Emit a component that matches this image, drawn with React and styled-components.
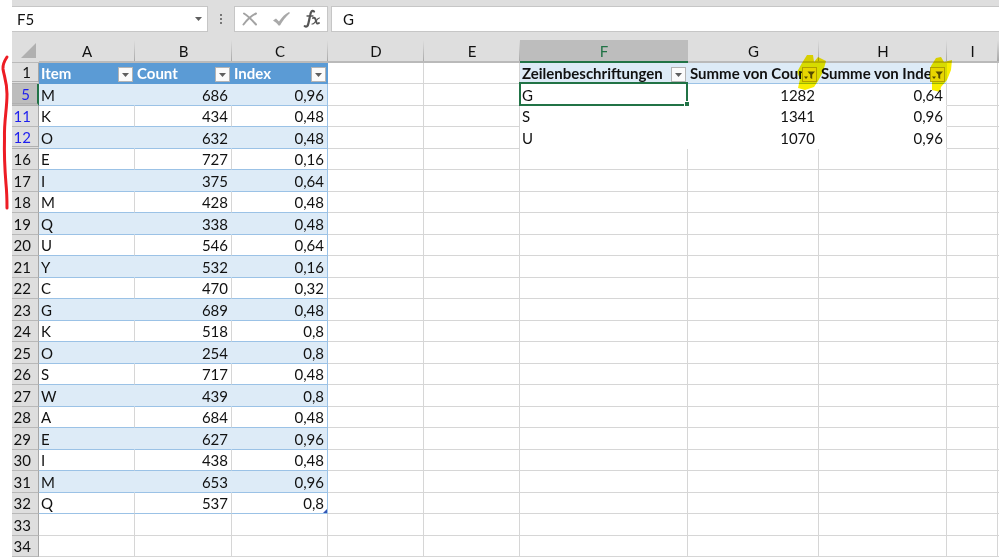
import styled, { createGlobalStyle } from 'styled-components';

const GlobalStyle = createGlobalStyle`
body {
    margin: 0;
    background-color: white;
    color: #111;
    font-family: Lato, "Liberation Sans", sans-serif;
    font-size: 15px;
    overflow: hidden;
}
`;

const Sheet = styled.main`
position: relative;
padding-left: 12px;
`;

const FormulaBar = styled.header`
display: flex;
align-items: center;
height: 40px;
box-sizing: border-box;
padding: 6px 0 8px;
background-color: #dedede;
`;

const NameBox = styled.div`
display: flex;
align-items: center;
width: 196px;
height: 26px;
box-sizing: border-box;
border: 1px solid #c6c6c6;
border-left: 0;
background-color: white;
`;

const TextInput = styled.input`
flex: 1;
min-width: 0;
height: 24px;
box-sizing: border-box;
border: 0;
outline: 0;
background: white;
color: inherit;
font: inherit;
padding: 0 ${props => props.$inset};
`;

const PlainButton = styled.button`
display: flex;
align-items: center;
justify-content: center;
width: ${props => props.$width};
height: 24px;
padding: 0;
border: 0;
background: transparent;
`;

const Grip = styled.div`
display: flex;
flex-direction: column;
align-items: center;
gap: 2px;
width: 26px;
`;

const Dot = styled.span`
width: 2px;
height: 2px;
background-color: #777;
`;

const Tools = styled.div`
display: flex;
justify-content: space-between;
width: 94px;
height: 26px;
box-sizing: border-box;
border: 1px solid #c6c6c6;
background-color: white;
`;

const FormulaBox = styled.div`
display: flex;
flex: 1;
height: 26px;
box-sizing: border-box;
margin-left: 3px;
border: 1px solid #c6c6c6;
border-right: 0;
`;

const Grid = styled.table`
width: 100%;
table-layout: fixed;
border-collapse: separate;
border-spacing: 0;
`;

const Col = styled.col`
width: ${props => props.$width};
`;

const HeadRow = styled.tr`
height: 23px;
`;

const Row = styled.tr`
height: 21px;
&:nth-child(even) {
    height: 22px;
}
`;

const ColumnHead = styled.th`
box-sizing: border-box;
padding: 2px 0 0;
font-weight: 400;
line-height: 19px;
color: ${props => (props.$active ? '#217346' : 'inherit')};
background: ${props => (props.$active ? '#bdbdbd' : 'linear-gradient(#dedede, #a8a8a8) right / 1px 100% no-repeat #dedede')};
border-bottom: ${props => (props.$active ? '2px solid #217346' : '2px solid #bababa')};
`;

const Corner = styled.td`
padding: 0 3px 2px 0;
background-color: #dedede;
border-bottom: 1px solid #bababa;
line-height: 0;
text-align: right;
`;

const RowHead = styled.th`
padding: 0 7px 0 0;
font-weight: 400;
line-height: 18px;
text-align: right;
color: ${props => (props.$filtered ? '#1f1fee' : 'inherit')};
background-color: ${props => (props.$active ? '#bdbdbd' : '#dedede')};
border-right: ${props => (props.$active ? '2px solid #217346' : '1px solid #a6a6a6')};
border-bottom: ${props => (props.$hiddenBelow ? '3px double #b0b0b0' : '1px solid #b8b8b8')};
`;

const Cell = styled.td`
padding: 0 3px 0 2px;
line-height: 18px;
white-space: nowrap;
overflow: hidden;
text-align: ${props => (props.$number ? 'right' : 'left')};
border-right: 1px solid #d6d6d6;
border-bottom: 1px solid #d6d6d6;
&:last-child {
    padding: 0;
    border-right: 0;
}
`;

const TableHead = styled(Cell)`
padding: 0 1px 0 2px;
font-weight: 700;
color: white;
background-color: #5b9bd5;
border-color: #5b9bd5;
`;

const TableCell = styled(Cell)`
background-color: ${props => (props.$band ? '#ddebf7' : 'white')};
border-bottom-color: #9bc2e6;
border-right-color: ${props => (props.$last ? '#9bc2e6' : props.$band ? '#ddebf7' : '#d6d6d6')};
position: relative;
`;

const TableEnd = styled.span`
position: absolute;
right: 0;
bottom: 0;
border-left: 4px solid transparent;
border-bottom: 4px solid #3355b5;
`;

const PivotHead = styled(Cell)`
padding: 0 1px 0 2px;
font-weight: 700;
background-color: #ddebf7;
border-right-color: #ddebf7;
border-bottom-color: #9bc2e6;
`;

const PivotCell = styled(Cell)`
border-bottom-color: white;
border-right-color: ${props => (props.$last ? '#d6d6d6' : 'white')};
`;

const SelectedCell = styled(Cell)`
position: relative;
overflow: visible;
border-color: white;
&::before {
    content: '';
    position: absolute;
    inset: -2px -1px -1px -1px;
    border: 2px solid #217346;
}
&::after {
    content: '';
    position: absolute;
    right: -3px;
    bottom: -2px;
    width: 4px;
    height: 4px;
    border: 1px solid white;
    background-color: #217346;
}
`;

const HeadContent = styled.div`
display: flex;
align-items: center;
height: 20px;
`;

const HeadLabel = styled.span`
flex: 1;
min-width: 0;
overflow: hidden;
`;

const FilterButton = styled.button`
display: flex;
flex: none;
align-items: center;
justify-content: center;
width: 15px;
height: 15px;
margin-top: 3px;
padding: 0;
border: 1px solid ${props => (props.$active ? '#b5ab22' : '#b4b4b4')};
background-color: ${props => (props.$active ? '#efe619' : '#fbfbfb')};
`;

const Marker = styled.svg`
position: absolute;
left: ${props => props.$left};
top: ${props => props.$top};
pointer-events: none;
mix-blend-mode: multiply;
`;

const columns = [
    { name: 'A', width: '96px' },
    { name: 'B', width: '97px' },
    { name: 'C', width: '96px' },
    { name: 'D', width: '96px' },
    { name: 'E', width: '96px' },
    { name: 'F', width: '168px' },
    { name: 'G', width: '131px' },
    { name: 'H', width: '128px' },
    { name: 'I', width: '51px' },
    { name: '', width: 'auto' },
];

const items = [
    [5, 'M', '686', '0,96'],
    [11, 'K', '434', '0,48'],
    [12, 'O', '632', '0,48'],
    [16, 'E', '727', '0,16'],
    [17, 'I', '375', '0,64'],
    [18, 'M', '428', '0,48'],
    [19, 'Q', '338', '0,48'],
    [20, 'U', '546', '0,64'],
    [21, 'Y', '532', '0,16'],
    [22, 'C', '470', '0,32'],
    [23, 'G', '689', '0,48'],
    [24, 'K', '518', '0,8'],
    [25, 'O', '254', '0,8'],
    [26, 'S', '717', '0,48'],
    [27, 'W', '439', '0,8'],
    [28, 'A', '684', '0,48'],
    [29, 'E', '627', '0,96'],
    [30, 'I', '438', '0,48'],
    [31, 'M', '653', '0,96'],
    [32, 'Q', '537', '0,8'],
];

const pivot = [
    ['G', '1282', '0,64'],
    ['S', '1341', '0,96'],
    ['U', '1070', '0,96'],
];

function Arrow() {
    return (
        <svg width="7" height="4" viewBox="0 0 7 4">
            <path d="M0 0h7L3.5 4z" fill="#5f5f5f" />
        </svg>
    );
}

function Funnel() {
    return (
        <svg width="13" height="10" viewBox="0 0 13 10">
            <path d="M4.500 1.500H12L9.200 4.800V9L7.300 8V4.800z" fill="#56500c" />
            <path d="M1 6.500h4L3 9z" fill="#56500c" />
        </svg>
    );
}

function Filter({ label, active }) {
    return (
        <FilterButton type="button" aria-label={`Filter ${label}`} $active={active}>
            {active ? <Funnel /> : <Arrow />}
        </FilterButton>
    );
}

function Heading({ as: Part, label, active }) {
    return (
        <Part>
            <HeadContent>
                <HeadLabel>{label}</HeadLabel>
                <Filter label={label} active={active} />
            </HeadContent>
        </Part>
    );
}

function Toolbar() {
    return (
        <FormulaBar>
            <NameBox>
                <TextInput aria-label="Name box" defaultValue="F5" $inset="5px" />
                <PlainButton type="button" aria-label="Open name list" $width="18px"><Arrow /></PlainButton>
            </NameBox>
            <Grip><Dot /><Dot /><Dot /></Grip>
            <Tools>
                <PlainButton type="button" aria-label="Cancel" $width="30px">
                    <svg width="16" height="14" viewBox="0 0 16 14" fill="none" stroke="#a3a3a3" strokeLinecap="round">
                        <path d="M2 1.500C6 4 10 8 14 12.500" strokeWidth="2" />
                        <path d="M14 1.500C9 4 5 8 1.500 12.500" strokeWidth="2" />
                    </svg>
                </PlainButton>
                <PlainButton type="button" aria-label="Enter" $width="30px">
                    <svg width="17" height="14" viewBox="0 0 17 14">
                        <path d="M0 8.500L3 6.500L6 9.500C9 5 12 2 16 0L17 1C12.500 5 9.500 9 7 13.500H5.500C4 11.500 2.500 10 0 8.500z" fill="#a9a9a9" />
                    </svg>
                </PlainButton>
                <PlainButton type="button" aria-label="Insert function" $width="30px">
                    <svg width="18" height="20" viewBox="0 0 18 20" fill="none" stroke="#555" strokeLinecap="round">
                        <path d="M11 2.500C9 0.800 7.700 3 7.200 6L5.500 14C5 17 3.500 18.500 1.800 17.200" strokeWidth="2.200" />
                        <path d="M4 7H10" strokeWidth="1.300" />
                        <path d="M10 9C12 8 12.500 10 13 12S14 15.500 16 14" strokeWidth="1.900" />
                        <path d="M16.500 9C14 8.500 12 15.500 9 15" strokeWidth="1.200" />
                    </svg>
                </PlainButton>
            </Tools>
            <FormulaBox>
                <TextInput aria-label="Formula" defaultValue="G" $inset="11px" />
            </FormulaBox>
        </FormulaBar>
    );
}

function BlankCells({ count }) {
    return Array.from({ length: count }, (_, i) => <Cell key={i} />);
}

function PivotRow({ row, selected }) {
    const First = selected ? SelectedCell : PivotCell;
    return (
        <>
            <First>{row[0]}</First>
            <PivotCell $number>{row[1]}</PivotCell>
            <PivotCell $number $last>{row[2]}</PivotCell>
            <BlankCells count={2} />
        </>
    );
}

function Worksheet() {
    return (
        <Grid>
            <colgroup>
                <Col $width="27px" />
                {columns.map((c, i) => <Col key={i} $width={c.width} />)}
            </colgroup>
            <thead>
                <HeadRow>
                    <Corner>
                        <svg width="15" height="15" viewBox="0 0 15 15"><path d="M15 0V15H0z" fill="#b0b0b0" /></svg>
                    </Corner>
                    {columns.map((c, i) => <ColumnHead key={i} scope="col" $active={c.name === 'F'}>{c.name}</ColumnHead>)}
                </HeadRow>
            </thead>
            <tbody>
                <Row>
                    <RowHead scope="row" $hiddenBelow>1</RowHead>
                    <Heading as={TableHead} label="Item" />
                    <Heading as={TableHead} label="Count" />
                    <Heading as={TableHead} label="Index" />
                    <BlankCells count={2} />
                    <Heading as={PivotHead} label="Zeilenbeschriftungen" />
                    <Heading as={PivotHead} label="Summe von Count" active />
                    <Heading as={PivotHead} label="Summe von Index" active />
                    <BlankCells count={2} />
                </Row>
                {items.map(([number, item, count, index], i) => (
                    <Row key={number}>
                        <RowHead
                            scope="row"
                            $active={number === 5}
                            $filtered={number < 16}
                            $hiddenBelow={number === 5 || number === 12}
                        >
                            {number}
                        </RowHead>
                        <TableCell $band={i % 2 === 0}>{item}</TableCell>
                        <TableCell $number $band={i % 2 === 0}>{count}</TableCell>
                        <TableCell $number $last $band={i % 2 === 0}>
                            {index}
                            {number === 32 && <TableEnd />}
                        </TableCell>
                        <BlankCells count={2} />
                        {pivot[i] ? <PivotRow row={pivot[i]} selected={i === 0} /> : <BlankCells count={5} />}
                    </Row>
                ))}
                {[33, 34].map(number => (
                    <Row key={number}>
                        <RowHead scope="row">{number}</RowHead>
                        <BlankCells count={10} />
                    </Row>
                ))}
            </tbody>
        </Grid>
    );
}

export default function App() {
    return (
        <Sheet>
            <GlobalStyle />
            <Toolbar />
            <Worksheet />
            {/* pen and highlighter strokes over the sheet */}
            <Marker $left="0px" $top="52px" width="12" height="160" viewBox="0 0 12 160" fill="none" stroke="#ed1c24" strokeWidth="3" strokeLinecap="round">
                <path d="M7 5C5 8 2.500 12 3 17C4 24 7 30 7 42C7 58 4 68 4.500 86C4 106 5 120 6 132C7 142 7 148 7 156" />
            </Marker>
            <Marker $left="796px" $top="54px" width="32" height="38" viewBox="0 0 32 38">
                <path d="M11 1L17 1L18 8L22 3L30 7L27 18L22 27L18 33L9 36L2 34L4 25L1 18L6 9z" fill="#f8ee00" />
            </Marker>
            <Marker $left="928px" $top="56px" width="26" height="38" viewBox="0 0 26 38">
                <path d="M8 2L13 1L16 6L24 4L23 14L19 24L13 31L12 36L4 34L4 26L1 20L3 10z" fill="#f8ee00" />
            </Marker>
        </Sheet>
    );
}
